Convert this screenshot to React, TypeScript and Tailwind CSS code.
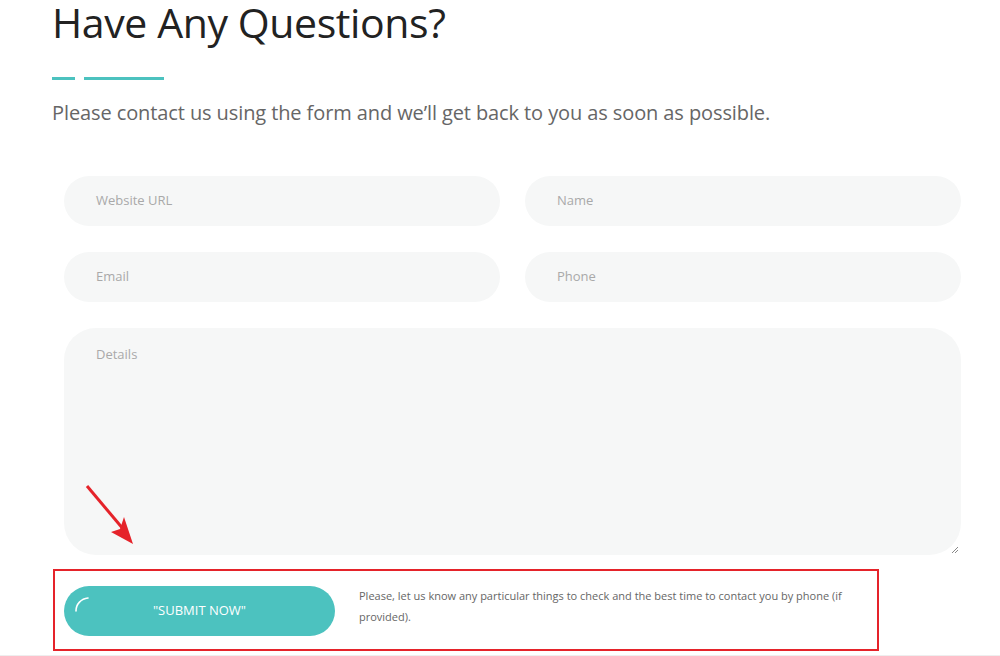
import React from 'react';

const font = { fontFamily: '"Open Sans", "Noto Sans", sans-serif' };

function Field({ label }: { label: string }) {
  return (
    <div className="flex h-[50px] items-center rounded-[26px] bg-[#f6f7f7] pl-[32px] text-[13px] text-[#a9a9a9]">
      {label}
    </div>
  );
}

export default function App() {
  return (
    <div className="relative h-[656px] w-[1000px] overflow-hidden border-b border-[#eeeeee] bg-white" style={font}>
      <section className="pl-[52px]">
        <h1 className="text-[41px] leading-[44px] tracking-[-0.4px] text-[#222222]">Have Any Questions?</h1>
        <div className="mt-[33px] flex gap-[9px]">
          <span className="h-[3px] w-[23px] bg-[#4cc2bf]" />
          <span className="h-[3px] w-[80px] bg-[#4cc2bf]" />
        </div>
        <p className="mt-[20px] text-[20px] leading-[26px] tracking-[-0.1px] text-[#666666]">
          Please contact us using the form and we’ll get back to you as soon as possible.
        </p>

        <form className="ml-[12px] mt-[50px] w-[897px]">
          <div className="grid grid-cols-2 gap-x-[25px] gap-y-[26px]">
            <Field label="Website URL" />
            <Field label="Name" />
            <Field label="Email" />
            <Field label="Phone" />
          </div>
          <div className="relative mt-[26px] h-[227px] rounded-[32px] bg-[#f6f7f7] pl-[32px] pt-[17px] text-[13px] text-[#a9a9a9]">
            Details
            <svg className="absolute bottom-[1px] right-[2px]" width="8" height="8" viewBox="0 0 8 8">
              <path d="M7 1 L1 7 M7 4 L4 7" stroke="#888" strokeWidth="1" />
            </svg>
          </div>
        </form>

        <div className="ml-[1px] mt-[14px] flex h-[82px] w-[826px] items-start border-2 border-[#e5232a] pl-[9px] pt-[15px]">
          <button className="relative flex h-[50px] w-[271px] shrink-0 items-center justify-center rounded-full bg-[#4cc2bf] text-[13px] font-medium text-white">
            <svg className="absolute left-[10px] top-[10px]" width="16" height="16" viewBox="0 0 16 16">
              <path d="M2 15 A13 13 0 0 1 14 2" fill="none" stroke="#ffffff" strokeWidth="1.6" strokeLinecap="round" />
            </svg>
            "SUBMIT NOW"
          </button>
          <p className="ml-[24px] mt-[-1px] text-[11px] leading-[21px] text-[#666666]">
            Please, let us know any particular things to check and the best time to contact you by phone (if provided).
          </p>
        </div>
      </section>

      <svg className="absolute left-[84px] top-[484px]" width="54" height="62" viewBox="0 0 54 62">
        <line x1="3" y1="2" x2="40" y2="46" stroke="#e5232a" strokeWidth="3" />
        <path d="M49 60 L27 48 L36 45 L40 33 Z" fill="#e5232a" />
      </svg>
    </div>
  );
}
